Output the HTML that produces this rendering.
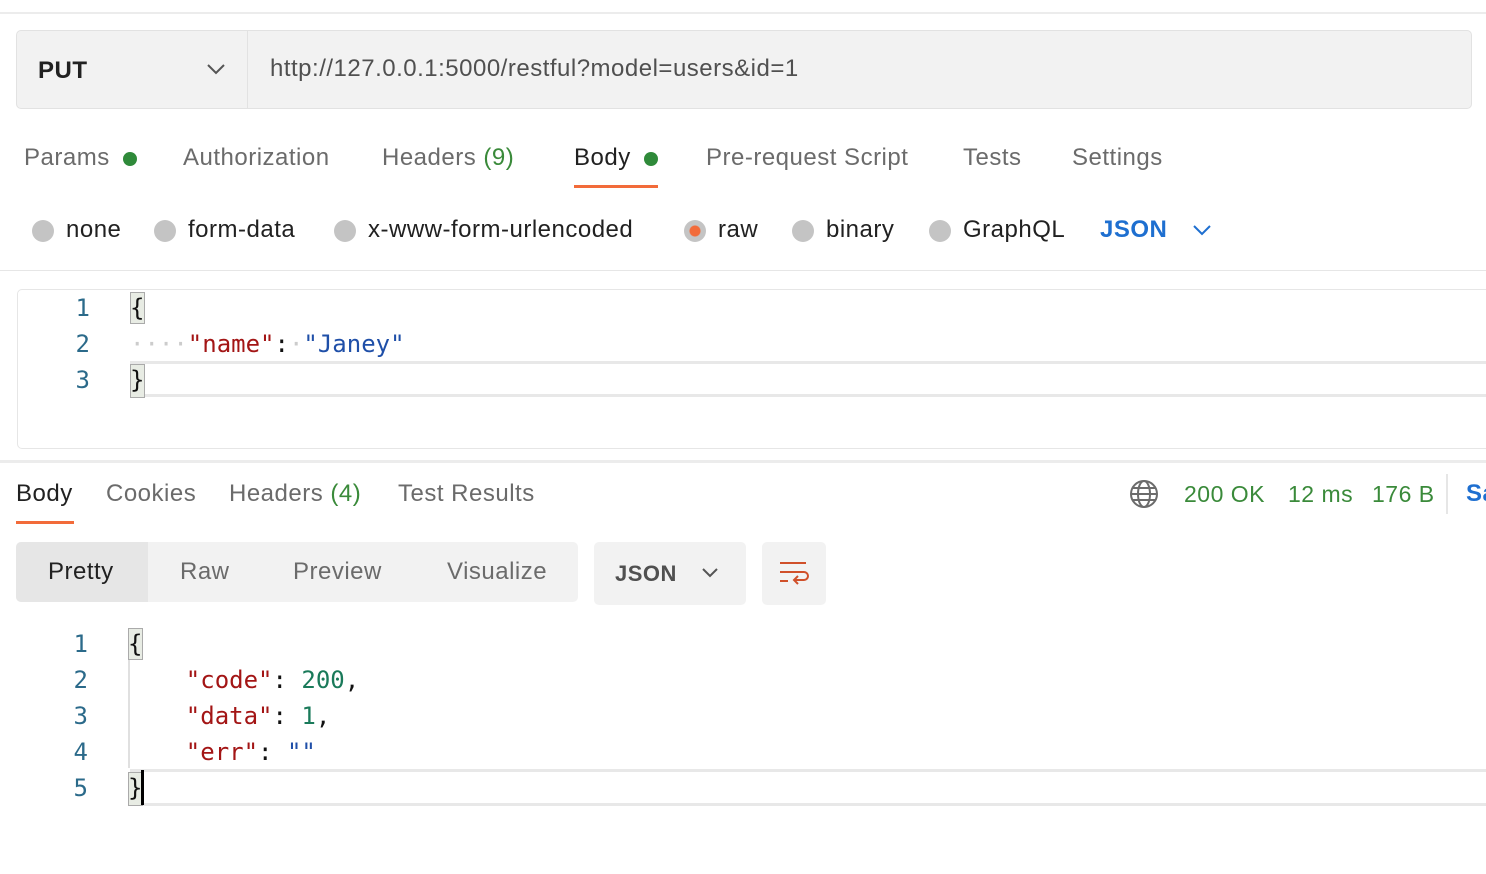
<!DOCTYPE html><html><head><style>
body{margin:0;width:1486px;height:874px;overflow:hidden;background:#fff;font-family:"Liberation Sans",sans-serif;position:relative;color:#6b6b6b}
.a{position:absolute;white-space:nowrap}
.t{font-size:24px;line-height:28px;letter-spacing:0.5px}
.m{font-family:"DejaVu Sans Mono","Liberation Mono",monospace;font-size:24px;line-height:36px}
.ln{color:#2b6a8a;width:30px;text-align:right}
.r{width:22px;height:22px;border-radius:50%;background:#c4c4c4;display:inline-block;vertical-align:middle;margin-right:12px}
.g{color:#3a8a3a}
</style></head><body>
<div class="a" style="left:0;top:12px;width:1486px;height:2px;background:#ececec"></div>
<div class="a" style="left:16px;top:30px;width:1454px;height:77px;background:#f2f2f2;border:1px solid #e2e2e2;border-radius:5px"></div>
<div class="a" style="left:247px;top:31px;width:1px;height:77px;background:#e2e2e2"></div>
<div class="a t" style="left:38px;top:57px;font-weight:bold;color:#212121">PUT</div>
<svg class="a" style="left:206px;top:62px" width="20" height="14"><path d="M2 3l8 8 8-8" fill="none" stroke="#555" stroke-width="2"/></svg>
<div class="a t" style="left:270px;top:55px;color:#505050">http://127.0.0.1:5000/restful?model=users&amp;id=1</div>
<div class="a t" style="left:24px;top:144px">Params <span class="r" style="width:14px;height:14px;background:#2f8a3a;margin:0 0 0 6px"></span></div>
<div class="a t" style="left:183px;top:144px">Authorization</div>
<div class="a t" style="left:382px;top:144px">Headers <span class="g">(9)</span></div>
<div class="a t" style="left:574px;top:144px;color:#212121">Body <span class="r" style="width:14px;height:14px;background:#2f8a3a;margin:0 0 0 6px"></span></div>
<div class="a" style="left:574px;top:185px;width:84px;height:3px;background:#f26b3a"></div>
<div class="a t" style="left:706px;top:144px">Pre-request Script</div>
<div class="a t" style="left:963px;top:144px">Tests</div>
<div class="a t" style="left:1072px;top:144px">Settings</div>
<div class="a t" style="left:32px;top:216px;color:#212121"><span class="r"></span>none</div>
<div class="a t" style="left:154px;top:216px;color:#212121"><span class="r"></span>form-data</div>
<div class="a t" style="left:334px;top:216px;color:#212121"><span class="r"></span>x-www-form-urlencoded</div>
<div class="a t" style="left:684px;top:216px;color:#212121"><span class="r" style="background:radial-gradient(#f26b3a 0 5px,#c4c4c4 6px)"></span>raw</div>
<div class="a t" style="left:792px;top:216px;color:#212121"><span class="r"></span>binary</div>
<div class="a t" style="left:929px;top:216px;color:#212121"><span class="r"></span>GraphQL</div>
<div class="a t" style="left:1100px;top:216px;color:#1e6fd0;font-weight:bold">JSON</div>
<svg class="a" style="left:1192px;top:223px" width="20" height="14"><path d="M2 3l8 8 8-8" fill="none" stroke="#1e6fd0" stroke-width="2"/></svg>
<div class="a" style="left:0;top:270px;width:1486px;height:1px;background:#e6e6e6"></div>
<div class="a" style="left:17px;top:289px;width:1480px;height:158px;border:1px solid #e6e6e6;border-radius:5px"></div>
<div class="a" style="left:130px;top:361px;width:1356px;height:36px;border-top:3px solid #e8e8e8;border-bottom:3px solid #e8e8e8;box-sizing:border-box"></div>
<div class="a m ln" style="left:60px;top:290px">1<br>2<br>3</div>
<div class="a" style="left:130px;top:292px;width:13px;height:30px;background:#e8ece4;border:1px solid #aaa"></div>
<div class="a" style="left:130px;top:364px;width:13px;height:32px;background:#e8ece4;border:1px solid #aaa"></div>
<div class="a m" style="left:130px;top:290px;color:#111">{<br><span style="color:#ccc">····</span><span style="color:#a31515">"name"</span>:<span style="color:#ccc">·</span><span style="color:#1f4fa8">"Janey"</span><br>}</div>
<div class="a" style="left:0;top:460px;width:1486px;height:3px;background:#ececec"></div>
<div class="a t" style="left:16px;top:480px;color:#212121">Body</div>
<div class="a" style="left:16px;top:521px;width:58px;height:3px;background:#f26b3a"></div>
<div class="a t" style="left:106px;top:480px">Cookies</div>
<div class="a t" style="left:229px;top:480px">Headers <span class="g">(4)</span></div>
<div class="a t" style="left:398px;top:480px">Test Results</div>
<svg class="a" style="left:1129px;top:479px" width="30" height="30" fill="none" stroke="#6b6b6b" stroke-width="2"><circle cx="15" cy="15" r="13"/><ellipse cx="15" cy="15" rx="6" ry="13"/><path d="M2 15h26M4 9h22M4 21h22"/></svg>
<div class="a t g" style="left:1184px;top:480px;font-size:23px">200 OK</div>
<div class="a t g" style="left:1288px;top:480px;font-size:23px">12 ms</div>
<div class="a t g" style="left:1372px;top:480px;font-size:23px">176 B</div>
<div class="a" style="left:1446px;top:474px;width:2px;height:40px;background:#e6e6e6"></div>
<div class="a t" style="left:1466px;top:480px;color:#1e6fd0;font-weight:bold">Sa</div>
<div class="a" style="left:16px;top:542px;width:562px;height:60px;background:#f2f2f2;border-radius:5px;overflow:hidden"><div style="width:132px;height:60px;background:#e6e6e6"></div></div>
<div class="a t" style="left:48px;top:558px;color:#212121">Pretty</div>
<div class="a t" style="left:180px;top:558px">Raw</div>
<div class="a t" style="left:293px;top:558px">Preview</div>
<div class="a t" style="left:447px;top:558px">Visualize</div>
<div class="a" style="left:594px;top:542px;width:152px;height:63px;background:#f2f2f2;border-radius:5px"></div>
<div class="a t" style="left:615px;top:560px;color:#505050;font-weight:bold;font-size:22px">JSON</div>
<svg class="a" style="left:701px;top:567px" width="18" height="12"><path d="M2 2l7 7 7-7" fill="none" stroke="#555" stroke-width="2"/></svg>
<div class="a" style="left:762px;top:542px;width:64px;height:63px;background:#f2f2f2;border-radius:5px"></div>
<svg class="a" style="left:778px;top:560px" width="32" height="30" fill="none" stroke="#d0502a" stroke-width="2"><path d="M2 3h26M2 12h24a4 4 0 0 1 0 8h-9M20 16l-4 4 4 4M2 21h8"/></svg>
<div class="a m ln" style="left:58px;top:626px">1<br>2<br>3<br>4<br>5</div>
<div class="a" style="left:128px;top:656px;width:2px;height:112px;background:#e0e0e0"></div>
<div class="a" style="left:130px;top:769px;width:1356px;height:37px;border-top:3px solid #e8e8e8;border-bottom:3px solid #e8e8e8;box-sizing:border-box"></div>
<div class="a" style="left:128px;top:628px;width:13px;height:30px;background:#e8ece4;border:1px solid #aaa"></div>
<div class="a" style="left:128px;top:772px;width:13px;height:32px;background:#e8ece4;border:1px solid #aaa"></div>
<div class="a" style="left:141px;top:770px;width:3px;height:35px;background:#000"></div>
<div class="a m" style="left:128px;top:626px;color:#111">{<br>&nbsp;&nbsp;&nbsp;&nbsp;<span style="color:#a31515">"code"</span>: <span style="color:#1a7a5a">200</span>,<br>&nbsp;&nbsp;&nbsp;&nbsp;<span style="color:#a31515">"data"</span>: <span style="color:#1a7a5a">1</span>,<br>&nbsp;&nbsp;&nbsp;&nbsp;<span style="color:#a31515">"err"</span>: <span style="color:#1f4fa8">""</span><br>}</div>
</body></html>
